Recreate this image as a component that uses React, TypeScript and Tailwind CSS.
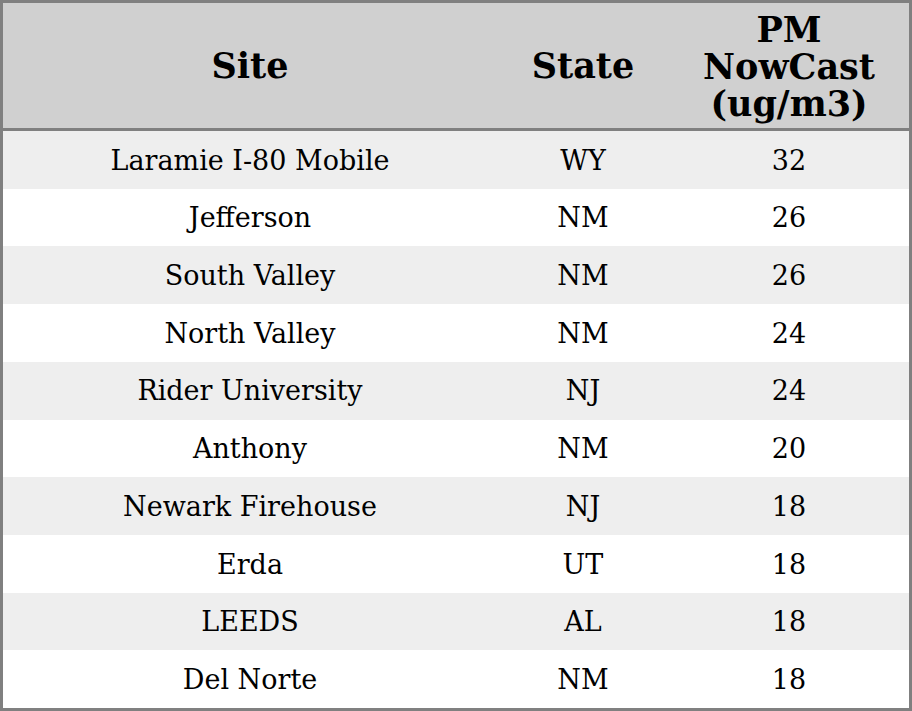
import React from 'react';

const rows: [string, string, string][] = [
  ['Laramie I-80 Mobile', 'WY', '32'],
  ['Jefferson', 'NM', '26'],
  ['South Valley', 'NM', '26'],
  ['North Valley', 'NM', '24'],
  ['Rider University', 'NJ', '24'],
  ['Anthony', 'NM', '20'],
  ['Newark Firehouse', 'NJ', '18'],
  ['Erda', 'UT', '18'],
  ['LEEDS', 'AL', '18'],
  ['Del Norte', 'NM', '18'],
];

export default function App() {
  return (
    <div className="w-[912px] h-[711px] border-[3px] border-[#808080] bg-white text-black font-['DejaVu_Serif',serif] flex flex-col">
      <div className="flex h-[128px] shrink-0 bg-[#d0d0d0] border-b-[3px] border-[#808080] font-bold text-[35px] leading-[37px]">
        <div className="w-[494px] flex items-center justify-center text-center">Site</div>
        <div className="w-[172px] flex items-center justify-center text-center">State</div>
        <div className="flex-1 flex items-center justify-center text-center pt-[1px]">
          PM<br />NowCast<br />(ug/m3)
        </div>
      </div>
      <div className="flex-1 flex flex-col text-[27px]">
        {rows.map(([site, state, pm], i) => (
          <div key={site} className={`flex flex-1 items-center pt-[2px] ${i % 2 === 0 ? 'bg-[#eeeeee]' : 'bg-white'}`}>
            <div className="w-[494px] text-center">{site}</div>
            <div className="w-[172px] text-center">{state}</div>
            <div className="flex-1 text-center">{pm}</div>
          </div>
        ))}
      </div>
    </div>
  );
}
